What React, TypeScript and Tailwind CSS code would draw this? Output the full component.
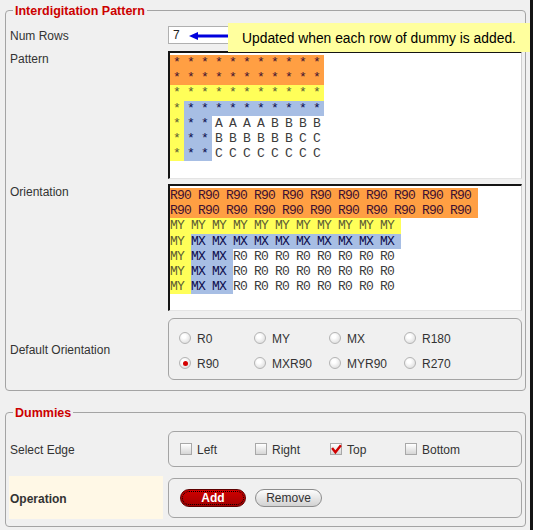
import React from "react";

type C = "o" | "y" | "b" | "n";

const bgOf: Record<C, string> = {
  o: "bg-[#ff9f43] text-[#3e1030]",
  y: "bg-[#ffff59] text-[#5c5c34]",
  b: "bg-[#a7bee4] text-[#0c0c4c]",
  n: "bg-white text-[#3c3c3c]",
};

const patternRows: { ch: string; c: C }[][] = (() => {
  const rows: { ch: string; c: C }[][] = [];
  const all = (c: C) => Array.from({ length: 11 }, () => ({ ch: "*", c }));
  rows.push(all("o"));
  rows.push(all("o"));
  rows.push(all("y"));
  rows.push([{ ch: "*", c: "y" }, ...Array.from({ length: 10 }, () => ({ ch: "*", c: "b" as C }))]);
  const tails = ["AAAABBBB", "BBBBBBCC", "CCCCCCCC"];
  for (const t of tails) {
    rows.push([
      { ch: "*", c: "y" },
      { ch: "*", c: "b" },
      { ch: "*", c: "b" },
      ...t.split("").map((ch) => ({ ch, c: "n" as C })),
    ]);
  }
  return rows;
})();

const orientRows: [string, C][][] = [
  [["R90 ".repeat(11), "o"]],
  [["R90 ".repeat(11), "o"]],
  [["MY ".repeat(11), "y"]],
  [["MY ", "y"], ["MX ".repeat(10), "b"]],
  [["MY ", "y"], ["MX MX ", "b"], ["R0 ".repeat(7) + "R0", "n"]],
  [["MY ", "y"], ["MX MX ", "b"], ["R0 ".repeat(7) + "R0", "n"]],
  [["MY ", "y"], ["MX MX ", "b"], ["R0 ".repeat(7) + "R0", "n"]],
];

function Radio({ label, checked }: { label: string; checked?: boolean }) {
  return (
    <div className="flex h-[20px] items-center gap-[6px]">
      <span className="flex h-[12px] w-[12px] items-center justify-center rounded-full border border-[#b4b4b4] bg-[radial-gradient(circle_at_40%_35%,#ffffff_20%,#d4d4d4_100%)]">
        {checked && <span className="h-[5px] w-[5px] rounded-full bg-[#d40000]" />}
      </span>
      <span className="pt-[1px] leading-[14px] text-[#333]">{label}</span>
    </div>
  );
}

function Check({ label, checked }: { label: string; checked?: boolean }) {
  return (
    <div className="flex h-[20px] items-center gap-[5px]">
      <span className="relative h-[12px] w-[12px] border border-[#a8a8a8] bg-linear-to-b from-white to-[#d6d6d6]">
        {checked && (
          <svg viewBox="0 0 12 12" className="absolute left-[0px] top-[0px] h-[11px] w-[11px]">
            <polyline points="2,5.5 4.8,9 10,2.5" fill="none" stroke="#d00000" strokeWidth="2.6" strokeLinecap="square" />
          </svg>
        )}
      </span>
      <span className="pt-[1px] leading-[14px] text-[#333]">{label}</span>
    </div>
  );
}

function Row({
  label,
  children,
  top,
  className = "",
}: {
  label: React.ReactNode;
  children: React.ReactNode;
  top?: boolean;
  className?: string;
}) {
  return (
    <div className={`flex gap-[5px] ${top ? "items-start" : "items-center"} ${className}`}>
      <div className={`w-[154px] pl-[1px] leading-[14px] ${top ? "pt-[1px]" : "pt-[2px]"}`}>{label}</div>
      <div className="w-[354px]">{children}</div>
    </div>
  );
}

export default function App() {
  return (
    <div className="relative flex h-[530px] w-[533px] overflow-hidden bg-[#f0f0f0] font-['Liberation_Sans',Arial,sans-serif] text-[12px] leading-[14px] text-[#333]">
      <div className="w-[530px] pl-[5px] pt-[3px]">
        <fieldset className="w-[521px] rounded-[4px] border border-[#a4a4a4]">
          <legend className="ml-[7px] px-[2px] pt-[1px] text-[12.5px] font-bold leading-[14px] text-[#cc0000]">
            Interdigitation Pattern
          </legend>
          <div className="pb-[10px] pl-[3px] pr-[3px] pt-[8px]">
            <Row label="Num Rows">
              <div className="h-[18px] w-[354px] border border-[#b0b0b0] bg-white pl-[4px] pt-[1px] leading-[15px] text-[#222]">
                7
              </div>
            </Row>
            <Row label="Pattern" top className="mt-[7px]">
              <div className="h-[128px] border-b border-l-2 border-r border-t-2 border-b-[#e4e4e4] border-l-[#141414] border-r-[#cfcfcf] border-t-[#141414] bg-white pt-[2px] font-['Liberation_Mono',monospace] text-[13px]">
                {patternRows.map((r, i) => (
                  <div key={i} className="flex h-[15.2px]">
                    {r.map((cell, j) => (
                      <span key={j} className={`h-[15.2px] w-[14px] text-center leading-[16px] ${bgOf[cell.c]}`}>
                        {cell.ch}
                      </span>
                    ))}
                  </div>
                ))}
              </div>
            </Row>
            <Row label="Orientation" top className="mt-[5px]">
              <div className="h-[127px] border-b border-l-2 border-r border-t-2 border-b-[#e4e4e4] border-l-[#141414] border-r-[#cfcfcf] border-t-[#141414] bg-white pt-[2px] font-['Liberation_Mono',monospace] text-[13px] tracking-[-0.8px]">
                {orientRows.map((r, i) => (
                  <div key={i} className="flex h-[15.2px] whitespace-pre">
                    {r.map(([t, c], j) => (
                      <span key={j} className={`h-[15.2px] leading-[16px] ${bgOf[c]}`}>
                        {t}
                      </span>
                    ))}
                  </div>
                ))}
              </div>
            </Row>
            <Row label="Default Orientation" className="mt-[7px]">
              <div className="h-[62px] rounded-[6px] border border-[#a4a4a4] pl-[10px] pt-[9px]">
                <div className="grid grid-cols-[75px_75px_75px_75px] gap-y-[5px]">
                  <Radio label="R0" />
                  <Radio label="MY" />
                  <Radio label="MX" />
                  <Radio label="R180" />
                  <Radio label="R90" checked />
                  <Radio label="MXR90" />
                  <Radio label="MYR90" />
                  <Radio label="R270" />
                </div>
              </div>
            </Row>
          </div>
        </fieldset>

        <fieldset className="mt-[14px] w-[521px] rounded-[4px] border border-[#a4a4a4]">
          <legend className="ml-[7px] px-[2px] pt-[1px] text-[12.5px] font-bold leading-[14px] text-[#cc0000]">Dummies</legend>
          <div className="pb-[7px] pl-[3px] pr-[3px] pt-[11px]">
            <Row label="Select Edge">
              <div className="flex h-[36px] items-center rounded-[6px] border border-[#a4a4a4] pl-[11px]">
                <div className="grid grid-cols-[75px_75px_75px_75px]">
                  <Check label="Left" />
                  <Check label="Right" />
                  <Check label="Top" checked />
                  <Check label="Bottom" />
                </div>
              </div>
            </Row>
            <div className="mt-[9px] flex h-[43px] items-center gap-[5px]">
              <div className="flex h-[43px] w-[154px] items-center bg-[#fff8e6] pl-[1px] pt-[2px] font-bold text-[#333]">
                Operation
              </div>
              <div className="flex h-[40px] w-[354px] items-center gap-[9px] rounded-[6px] border border-[#a4a4a4] pl-[11px]">
                <button className="h-[18px] w-[66px] rounded-full border border-[#5c0000] bg-linear-to-b from-[#d00000] to-[#a40000] text-[12px] font-bold leading-[16px] text-white outline-1 outline-offset-[-3px] outline-black outline-dotted">
                  Add
                </button>
                <button className="h-[18px] w-[67px] rounded-full border border-[#8c8c8c] bg-linear-to-b from-[#fdfdfd] to-[#d2d2d2] text-[12px] leading-[16px] text-[#333]">
                  Remove
                </button>
              </div>
            </div>
          </div>
        </fieldset>
      </div>
      <div className="w-[3px] bg-[#141414]" />

      <svg className="absolute left-[188px] top-[30px] h-[12px] w-[41px]" viewBox="0 0 41 12">
        <polygon points="1,6 10,2 10,10" fill="#0000dd" />
        <rect x="8" y="4.5" width="33" height="3" fill="#0000dd" />
      </svg>
      <div className="absolute left-[228px] top-[23px] flex h-[29px] w-[302px] items-center bg-[#ffff9e] pl-[14px] text-[13.85px] text-black">
        Updated when each row of dummy is added.
      </div>
    </div>
  );
}
